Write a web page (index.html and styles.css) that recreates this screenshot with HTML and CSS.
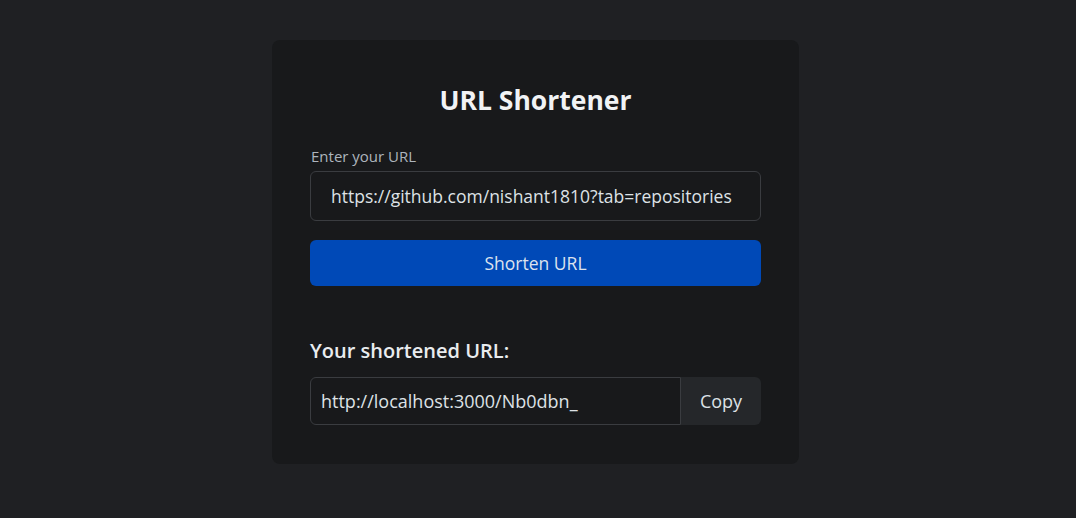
FILE: index.html
```html
<!DOCTYPE html>
<html lang="en">
<head>
<meta charset="utf-8">
<title>URL Shortener</title>
<link rel="stylesheet" href="styles.css">
</head>
<body>
<main class="page">
  <section class="card">
    <h1 class="title">URL Shortener</h1>
    <label class="label" for="url">Enter your URL</label>
    <input class="field" id="url" type="text" value="https://github.com/nishant1810?tab=repositories">
    <button class="primary" type="button">Shorten URL</button>
    <h2 class="result-title">Your shortened URL:</h2>
    <div class="group">
      <input class="group-field" type="text" value="http://localhost:3000/Nb0dbn_" readonly>
      <button class="copy" type="button">Copy</button>
    </div>
  </section>
</main>
</body>
</html>
```

FILE: styles.css
```css
* { box-sizing: border-box; }
html, body { margin: 0; height: 100%; }
body {
  background: #1f2023;
  font-family: "Open Sans", "Noto Sans", sans-serif;
  color: #e9ecef;
}
.page {
  display: flex;
  justify-content: center;
  padding: 40px 5px 0 0;
}
.card {
  width: 527px;
  background: #18191b;
  border-radius: 8px;
  padding: 38px 38px 39px;
  display: flex;
  flex-direction: column;
}
.title {
  margin: 6px 0 0;
  text-align: center;
  font-size: 26.5px;
  font-weight: 700;
  line-height: 32px;
  color: #f1f3f5;
}
.label {
  margin-top: 30px;
  font-size: 15px;
  line-height: 20px;
  color: #adb5bd;
  margin-left: 1px;
}
.field {
  margin-top: 5px;
  height: 50px;
  width: 100%;
  background: #18191b;
  border: 1px solid #3a3c40;
  border-radius: 6px;
  padding: 0 18px 0 20px;
  font-family: inherit;
  font-size: 17.5px;
  color: #dee2e6;
  outline: none;
}
.primary {
  margin-top: 19px;
  height: 46px;
  width: 100%;
  background: #0049b7;
  border: none;
  border-radius: 6px;
  font-family: inherit;
  font-size: 17.5px;
  color: #dde3ee;
}
.result-title {
  margin: 52px 0 0;
  font-size: 20px;
  line-height: 26px;
  font-weight: 600;
  color: #e9ecef;
}
.group {
  margin-top: 13px;
  display: flex;
  height: 48px;
}
.group-field {
  flex: 1;
  min-width: 0;
  background: #18191b;
  border: 1px solid #3a3c40;
  border-radius: 6px 0 0 6px;
  padding: 0 10px;
  font-family: inherit;
  font-size: 18px;
  color: #dee2e6;
  outline: none;
}
.copy {
  width: 80px;
  background: #25272a;
  border: none;
  border-radius: 0 6px 6px 0;
  font-family: inherit;
  font-size: 18px;
  color: #dee2e6;
}
```
